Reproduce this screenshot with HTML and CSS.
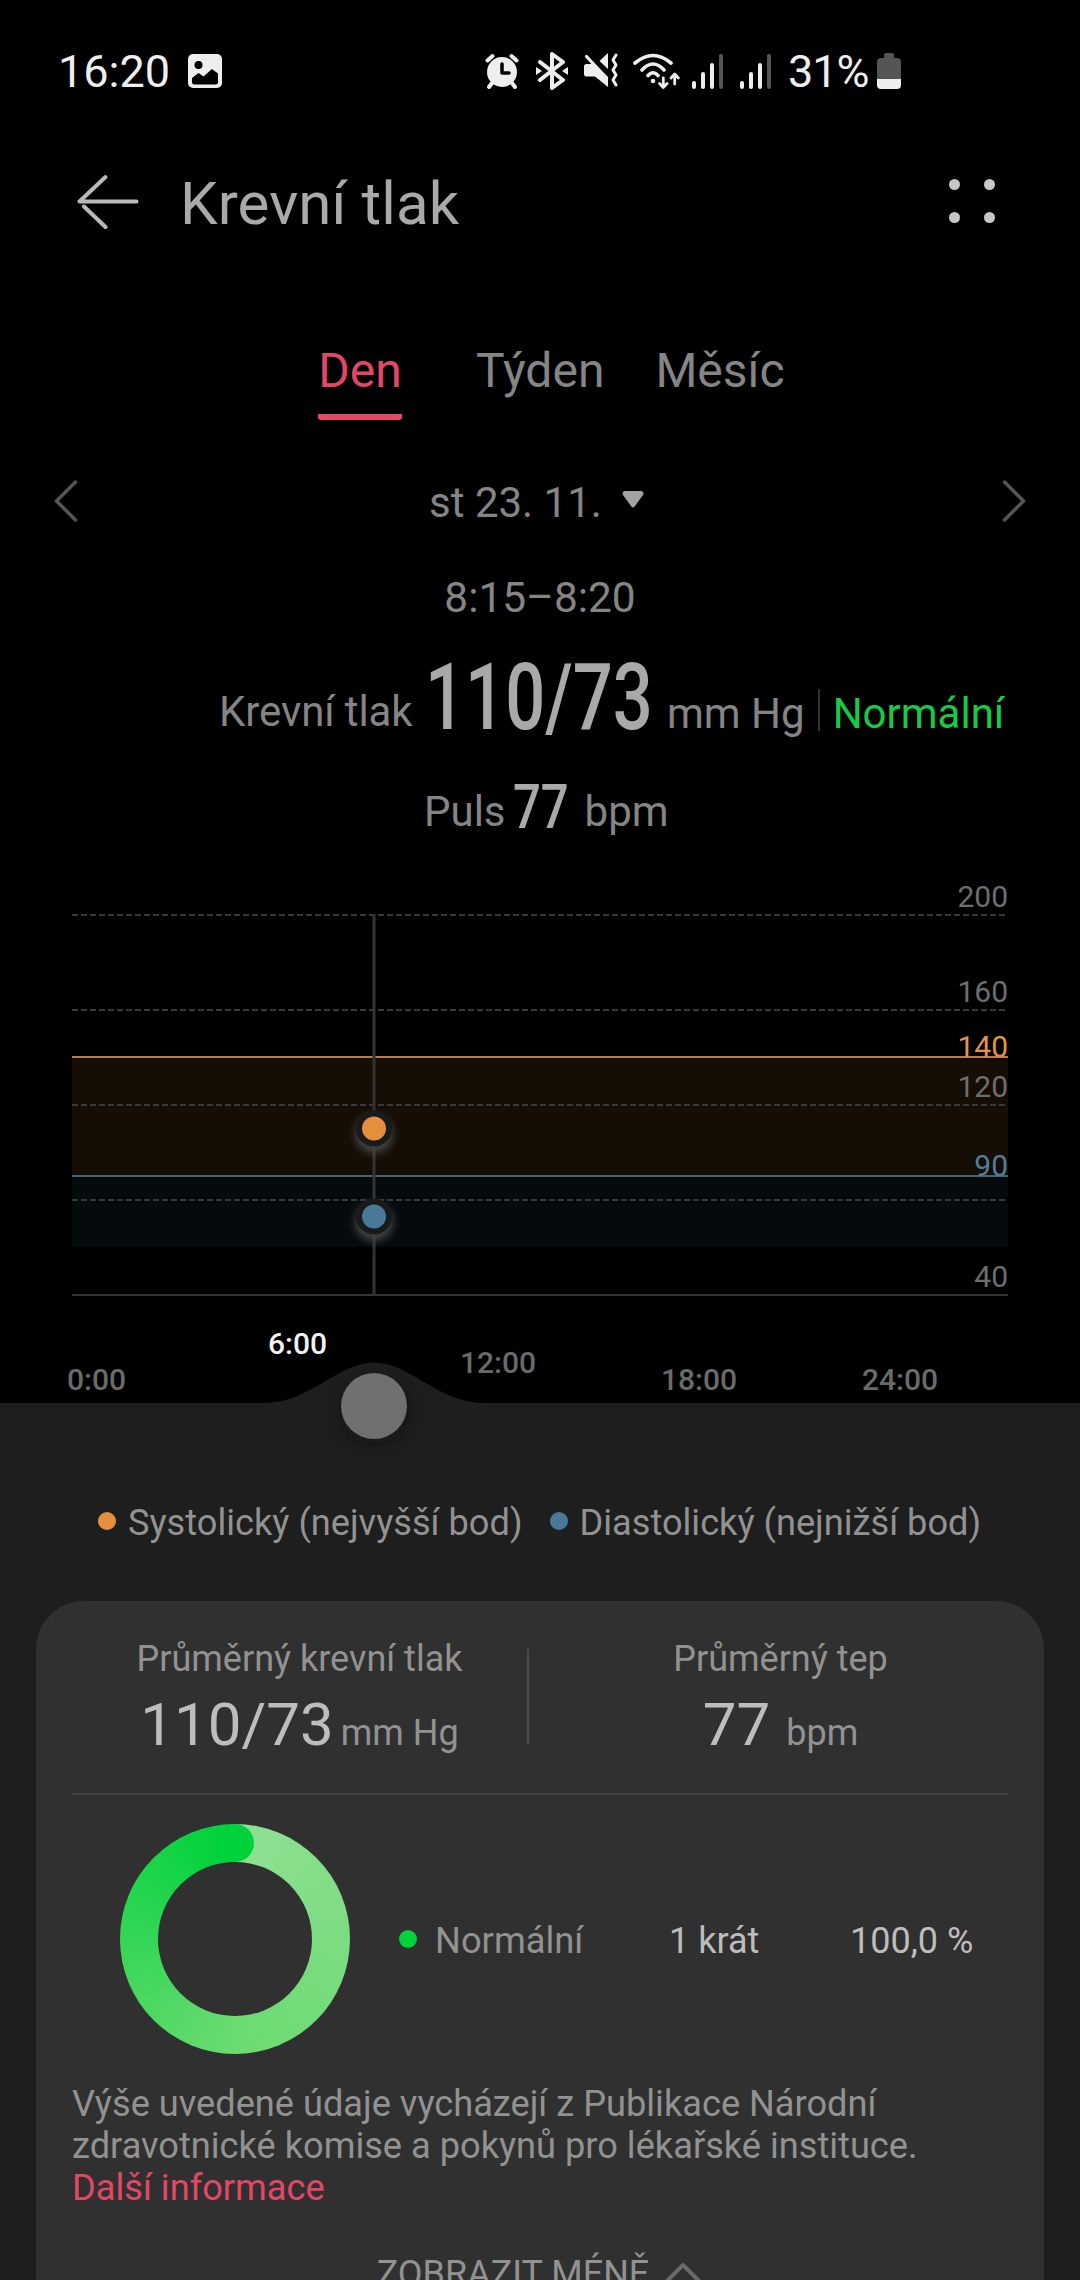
FILE: index.html
```html
<!DOCTYPE html>
<html lang="cs">
<head>
    <meta charset="UTF-8">
    <meta name="viewport" content="width=device-width, initial-scale=1.0">
    <title>Krevní tlak</title>
    <link rel="stylesheet" href="styles.css">
</head>
<body>
    <!-- Stavový řádek -->
    <div class="status">
        <span class="clock">16:20</span>
        <svg class="picture" width="34" height="34" viewBox="0 0 34 34">
            <rect width="34" height="34" rx="5" fill="#eee"/>
            <circle cx="10.500" cy="11" r="4" fill="#000"/>
            <path d="M4 24l6.500-5 5 3.500 8.500-7.500 6 4.500V28q0 2.500-2.500 2.500h-21Q4 30.500 4 28z" fill="#000"/>
        </svg>
        <div class="status-icons">
            <svg width="34" height="36" viewBox="0 0 34 36">
                <circle cx="17" cy="19" r="15" fill="#eee"/>
                <path d="M2.500 7.500l5-4.500M31.500 7.500l-5-4.500M7 30l-3 4M27 30l3 4" stroke="#eee" stroke-width="4" stroke-linecap="round"/>
                <path d="M17 11v9h7" fill="none" stroke="#000" stroke-width="3.500" stroke-linecap="round" stroke-linejoin="round"/>
            </svg>
            <svg class="bt" width="34" height="38" viewBox="0 0 34 38">
                <path d="M5 10l23 18-11 8V2l11 8L5 28" fill="none" stroke="#eee" stroke-width="4" stroke-linecap="round" stroke-linejoin="round"/>
                <path d="M1 15l6 4-6 4zM33 15l-6 4 6 4z" fill="#eee"/>
            </svg>
            <svg class="mute" width="36" height="36" viewBox="0 0 36 36">
                <path d="M0 13.500Q0 11 2.500 11H10L24 24v10L11 23.500H2.500Q0 23.500 0 21zM24 0v16l-8.500-8z" fill="#eee"/>
                <path d="M2.500 3.500l20 21.500" stroke="#eee" stroke-width="3.200" stroke-linecap="round"/>
                <path d="M32 2l-3 5 3 5-3 5 3 5-3 5 3 5" fill="none" stroke="#eee" stroke-width="3" stroke-linecap="round" stroke-linejoin="round"/>
            </svg>
            <svg class="wifi" width="50" height="38" viewBox="0 0 50 38">
                <g fill="none" stroke="#eee" stroke-width="3.600" stroke-linecap="round" stroke-linejoin="round">
                    <path d="M4 11Q22-4 40 11M11 18Q22 6 33 18M17 23.500Q22 18 27 23.500"/>
                    <path d="M32.300 26v9M28.500 31.500l3.800 4 3.800-4M43.700 32v-9.500M40 26l3.700-4 3.700 4" stroke-width="2.800"/>
                </g>
                <circle cx="22" cy="29" r="2.300" fill="#eee"/>
            </svg>
            <svg class="signal" width="33" height="36" viewBox="0 0 33 36">
                <g stroke="#eee" stroke-width="4" stroke-linecap="round">
                    <path d="M3 30v4M12 21v13M21 12v22"/>
                    <path d="M30 3v31" stroke="#555"/>
                </g>
            </svg>
            <svg class="signal second" width="33" height="36" viewBox="0 0 33 36">
                <g stroke="#eee" stroke-width="4" stroke-linecap="round">
                    <path d="M3 30v4M12 21v13M21 12v22"/>
                    <path d="M30 3v31" stroke="#555"/>
                </g>
            </svg>
            <span class="percent">31%</span>
            <svg class="battery" width="24" height="36" viewBox="0 0 24 36">
                <path d="M7 5V2q0-2 2-2h6q2 0 2 2v3h3q4 0 4 4v17H0V9q0-4 4-4z" fill="#555"/>
                <path d="M0 26h24v6q0 4-4 4H4q-4 0-4-4z" fill="#eee"/>
            </svg>
        </div>
    </div>

    <!-- Hlavička -->
    <div class="header">
        <svg class="back" width="62" height="56" viewBox="0 0 62 56">
            <path d="M28.500 3L2.500 27.500H59.500M7 32.500L28.500 53" fill="none" stroke="#b9b9b9" stroke-width="4" stroke-linecap="round" stroke-linejoin="round"/>
        </svg>
        <h1>Krevní tlak</h1>
        <div class="more"><i></i><i></i><i></i><i></i></div>
    </div>

    <div class="tabs">
        <span class="tab active">Den</span>
        <span class="tab">Týden</span>
        <span class="tab">Měsíc</span>
    </div>

    <div class="date-row">
        <svg width="24" height="44" viewBox="0 0 24 44"><path d="M21.500 3L2.500 22l19 19" fill="none" stroke="#555" stroke-width="3.500" stroke-linecap="round"/></svg>
        <div class="date">
            <span>st 23. 11.</span>
            <svg width="22" height="17" viewBox="0 0 22 17"><path d="M2.500 0h17q3 1 1.500 4l-8 11q-2 3-4 0L1 4q-1.500-3 1.500-4z" fill="#a2a2a2"/></svg>
        </div>
        <svg width="24" height="44" viewBox="0 0 24 44"><path d="M2.500 3l19 19-19 19" fill="none" stroke="#555" stroke-width="3.500" stroke-linecap="round"/></svg>
    </div>
    <div class="time">8:15–8:20</div>

    <!-- Naměřené hodnoty -->
    <div class="reading">
        <span class="text label">Krevní tlak</span>
        <span class="big">110/73</span>
        <span class="text">mm Hg</span>
        <span class="bar"></span>
        <span class="text normal">Normální</span>
    </div>
    <div class="reading pulse">
        <span class="text">Puls</span>
        <span class="mid">77</span>
        <span class="text">bpm</span>
    </div>

    <!-- Graf -->
    <svg class="chart" width="1080" height="600" viewBox="0 860 1080 600">
        <defs>
            <filter id="glow" x="-50%" y="-50%" width="200%" height="200%"><feGaussianBlur stdDeviation="4"/></filter>
            <filter id="shade" x="-50%" y="-50%" width="200%" height="200%"><feGaussianBlur stdDeviation="8"/></filter>
        </defs>
        <rect x="72" y="1057" width="936" height="118" fill="#160d05"/>
        <rect x="72" y="1175" width="936" height="72" fill="#050a0d"/>
        <g stroke="#393939" stroke-width="2" stroke-dasharray="6 3">
            <path d="M72 915H1006M72 1010H1006M72 1105H1006M72 1200H1006"/>
        </g>
        <path d="M72 1295H1008" stroke="#333" stroke-width="2"/>
        <path d="M72 1057H1008" stroke="#b97a4c" stroke-width="2"/>
        <path d="M72 1176H1008" stroke="#466376" stroke-width="2"/>
        <path d="M374 914V1295" stroke="#333" stroke-width="3"/>
        <g class="y-labels">
            <text x="1008" y="907">200</text>
            <text x="1008" y="1002">160</text>
            <text x="1008" y="1057" class="sys">140</text>
            <text x="1008" y="1097">120</text>
            <text x="1008" y="1176" class="dia">90</text>
            <text x="1008" y="1287">40</text>
        </g>
        <circle cx="374" cy="1134" r="19" fill="#444" filter="url(#glow)"/>
        <circle cx="374" cy="1128.500" r="18" fill="#1a1a1a"/>
        <circle cx="374" cy="1128.500" r="12" fill="#e38f3c"/>
        <circle cx="374" cy="1222" r="19" fill="#444" filter="url(#glow)"/>
        <circle cx="374" cy="1216.500" r="18" fill="#1a1a1a"/>
        <circle cx="374" cy="1216.500" r="12" fill="#487998"/>

        <path d="M0 1403H264C310 1403 338 1362.500 374 1362.500S438 1403 484 1403H1080V1460H0z" fill="#1e1e1e"/>
        <circle cx="374" cy="1411" r="32" fill="#111" opacity=".5" filter="url(#shade)"/>
        <circle cx="374" cy="1406" r="33" fill="#707070"/>
        <g class="x-labels">
            <text x="96.500" y="1390">0:00</text>
            <text x="297.500" y="1354" class="current">6:00</text>
            <text x="498" y="1373">12:00</text>
            <text x="699" y="1390">18:00</text>
            <text x="900" y="1390">24:00</text>
        </g>
    </svg>

    <div class="panel">
        <div class="legend">
            <span class="dot orange"></span>
            <span class="legend-text">Systolický (nejvyšší bod)</span>
            <span class="dot blue"></span>
            <span class="legend-text">Diastolický (nejnižší bod)</span>
        </div>

        <div class="card">
            <div class="stats">
                <div class="stat">
                    <div class="stat-title">Průměrný krevní tlak</div>
                    <div class="stat-value">110/73<small>mm Hg</small></div>
                </div>
                <div class="stat-line"></div>
                <div class="stat right">
                    <div class="stat-title">Průměrný tep</div>
                    <div class="stat-value">77<small>bpm</small></div>
                </div>
            </div>
            <div class="share">
                <div class="ring"></div>
                <span class="dot green"></span>
                <span class="share-name">Normální</span>
                <span class="share-count">1 krát</span>
                <span class="share-percent">100,0 %</span>
            </div>
            <p>Výše uvedené údaje vycházejí z Publikace Národní zdravotnické komise a pokynů pro lékařské instituce.<br><a>Další informace</a></p>
            <div class="less">
                <span>ZOBRAZIT MÉNĚ</span>
                <svg width="40" height="26" viewBox="0 0 40 26"><path d="M2 22L20 4l18 18" fill="none" stroke="#6a6a6a" stroke-width="4" stroke-linecap="round" stroke-linejoin="round"/></svg>
            </div>
        </div>
    </div>
</body>
</html>
```
FILE: styles.css
```css
* {
    box-sizing: border-box;
}
body {
    margin: 0;
    width: 1080px;
    height: 2280px;
    overflow: hidden;
    background: #000;
    color: #858585;
    font-family: Roboto, "Liberation Sans", sans-serif;
    font-size: 42px;
}
svg {
    display: block;
    flex: none;
}
span {
    white-space: nowrap;
}
.status {
    display: flex;
    align-items: center;
    height: 142px;
    padding-left: 58px;
    color: #eee;
    font-size: 45px;
}
.clock {
    width: 130px;
}
.status-icons {
    display: flex;
    align-items: center;
    margin-left: 263px;
}
.bt {
    margin-left: 16px;
}
.mute {
    margin-left: 15px;
}
.wifi {
    margin-left: 11px;
}
.signal {
    margin-left: 10px;
}
.signal.second {
    margin-left: 15px;
}
.percent {
    width: 89px;
    margin-left: 16px;
    letter-spacing: -1px;
}
.header {
    display: flex;
    align-items: center;
    height: 122px;
    padding: 0 85px 0 77px;
}
.back {
    margin-bottom: 3px;
}
h1 {
    flex: 1;
    margin: 0 0 0 41px;
    color: #a9a9a9;
    font-size: 60px;
    font-weight: 400;
    letter-spacing: .1px;
}
.more {
    display: grid;
    grid-template-columns: 11px 11px;
    gap: 22px 24px;
    padding-bottom: 5px;
}
.more i {
    width: 11px;
    height: 11px;
    border-radius: 50%;
    background: #c6c6c6;
}
.tabs {
    display: flex;
    margin-top: 77px;
    padding-left: 318px;
    font-size: 48px;
    line-height: 60px;
}
.tab {
    height: 79px;
    margin-right: 51px;
}
.tab.active {
    width: 84px;
    margin-right: 74px;
    border-bottom: 6px solid #e24767;
    border-radius: 3px;
    color: #e24767;
    text-align: center;
}
.date-row {
    display: flex;
    align-items: center;
    justify-content: space-between;
    height: 60px;
    margin-top: 51px;
    padding: 0 54px;
}
.date {
    display: flex;
    align-items: center;
    gap: 20px;
    padding: 2px 7px 0 0;
}
.date svg {
    margin-bottom: 6px;
}
.time {
    margin-top: 37px;
    font-size: 42.4px;
    line-height: 60px;
    text-align: center;
}
.reading {
    display: flex;
    align-items: flex-end;
    height: 116px;
    padding-left: 219px;
    line-height: 1;
}
.reading .text {
    padding-bottom: 9px;
}
.reading .label {
    width: 206px;
    padding-bottom: 11px;
    letter-spacing: -.1px;
}
/* zúžené číslice */
.big, .mid {
    color: #a9a9a9;
    font-weight: 500;
    transform-origin: left;
}
.big {
    width: 242px;
    font-size: 93px;
    transform: scaleX(.758);
}
.bar {
    width: 2px;
    height: 42px;
    margin: 0 13px 13px 13px;
    background: #333;
}
.reading .normal {
    color: #16cc46;
}
.pulse {
    height: 94px;
    padding-left: 424px;
}
.pulse .text {
    padding-bottom: 5px;
}
.mid {
    width: 72px;
    margin-left: 7px;
    font-size: 62px;
    transform: scaleX(.79);
}
.chart {
    margin-top: 22px;
    font-size: 30px;
}
.y-labels text {
    fill: #6e6e6e;
    text-anchor: end;
}
.y-labels .sys {
    fill: #e0954a;
}
.y-labels .dia {
    fill: #4f7f9e;
}
.x-labels text {
    fill: #6a6a6a;
    font-weight: 500;
    text-anchor: middle;
}
.x-labels .current {
    fill: #f2f2f2;
}
.panel {
    height: 820px;
    background: #1e1e1e;
    color: #929292;
    font-size: 36px;
}
.dot {
    flex: none;
    width: 18px;
    height: 18px;
    border-radius: 50%;
}
.orange {
    background: #e38f3c;
}
.blue {
    margin-left: 27px;
    background: #487998;
}
.green {
    margin-left: 49px;
    background: #00d23a;
}
.legend {
    display: flex;
    align-items: center;
    height: 122px;
    padding-left: 98px;
}
.legend-text {
    margin-left: 12px;
    padding-top: 2px;
    font-size: 36.2px;
}
.card {
    height: 720px;
    margin: 19px 36px 0;
    padding: 36px 36px 0;
    border-radius: 48px 48px 0 0;
    background: #303030;
}
.stats {
    display: flex;
    height: 158px;
    border-bottom: 2px solid #424242;
}
.stat {
    flex: 1;
    text-align: center;
}
.stat.right {
    flex: 0 0 479px;
    padding-left: 24px;
}
.stat-line {
    width: 2px;
    height: 96px;
    margin-top: 12px;
    background: #4c4c4c;
}
.stat-title {
    line-height: 44px;
}
.stat-value {
    margin-top: 14px;
    color: #bdbdbd;
    font-size: 60px;
    line-height: 60px;
}
.stat-value small {
    margin-left: 7px;
    color: #929292;
    font-size: 36px;
}
.right small {
    margin-left: 16px;
}
.share {
    display: flex;
    align-items: center;
    margin-top: 29px;
    padding-left: 48px;
}
.ring {
    position: relative;
    width: 230px;
    height: 230px;
    border-radius: 50%;
    background: conic-gradient(#90e092, #7cdc82 25%, #6bdb70 50%, #34d657 75%, #00d23a 98%);
}
.ring::before, .ring::after {
    content: "";
    position: absolute;
    border-radius: 50%;
}
.ring::before {
    top: 0;
    left: 96px;
    width: 38px;
    height: 38px;
    background: #00d23a;
}
.ring::after {
    inset: 38px;
    background: #303030;
}
.share-name, .share-count, .share-percent {
    padding-top: 3px;
}
.share-name {
    width: 234px;
    margin-left: 18px;
    font-size: 36.3px;
}
.share-count {
    width: 181px;
    color: #bdbdbd;
}
.share-percent {
    color: #bdbdbd;
}
p {
    margin: 29px 0 0;
    font-size: 36.2px;
    line-height: 42px;
}
a {
    color: #e24767;
}
.less {
    display: flex;
    align-items: center;
    justify-content: center;
    gap: 14px;
    height: 42px;
    margin-top: 44px;
}
```
